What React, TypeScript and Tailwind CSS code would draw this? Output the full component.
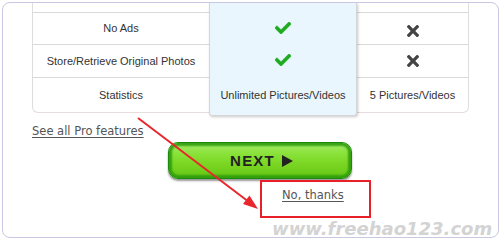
import React from "react";

const sans = { fontFamily: '"Liberation Sans", Arial, sans-serif' };
const deja = { fontFamily: '"DejaVu Sans", Verdana, sans-serif' };

function Check() {
  return (
    <svg width="16" height="12" viewBox="0 69 512 375" className="block">
      <path
        fill="#1faa1f"
        stroke="#1faa1f"
        strokeWidth="20"
        d="M173.898 439.404l-166.4-166.4c-9.997-9.997-9.997-26.206 0-36.204l36.203-36.204c9.997-9.998 26.207-9.998 36.204 0L192 312.69 432.095 72.596c9.997-9.997 26.207-9.997 36.204 0l36.203 36.204c9.997 9.997 9.997 26.206 0 36.204l-294.4 294.401c-9.998 9.997-26.207 9.997-36.204-.001z"
      />
    </svg>
  );
}

function Cross() {
  return (
    <svg width="12" height="12" viewBox="0 80 352 352" className="block">
      <path
        fill="#444444"
        d="M242.72 256l100.07-100.07c12.28-12.280 12.28-32.19 0-44.48l-22.24-22.24c-12.28-12.28-32.19-12.28-44.48 0L176 189.28 75.930 89.21c-12.28-12.28-32.19-12.28-44.48 0L9.21 111.45c-12.28 12.28-12.28 32.19 0 44.48L109.28 256 9.21 356.07c-12.28 12.28-12.28 32.19 0 44.48l22.24 22.24c12.28 12.28 32.2 12.28 44.48 0L176 322.72l100.07 100.07c12.28 12.28 32.2 12.28 44.48 0l22.24-22.24c12.28-12.28 12.28-32.19 0-44.48L242.72 256z"
      />
    </svg>
  );
}

const rowH = ["h-[10px]", "h-[32px]", "h-[33px]", "h-[34px]"];

export default function App() {
  const left = ["", "No Ads", "Store/Retrieve Original Photos", "Statistics"];
  return (
    <div className="relative w-[500px] h-[240px] bg-white overflow-hidden">
      <div className="ml-[2px] mt-[2px] w-[497px] h-[236px] border border-[#c8c8e2] rounded-[8px] overflow-hidden pl-[29px] flex flex-col items-start">
        {/* table */}
        <div
          className="flex w-[437px] border-l border-r border-b border-[#dddddd] border-b-[#e6dcdc] rounded-b-[6px] text-[11px] text-[#333333]"
          style={sans}
        >
          <div className="w-[176px] flex flex-col">
            {left.map((t, i) => (
              <div
                key={i}
                className={`${rowH[i]} flex items-center justify-center ${i < 3 ? "border-b border-[#d9d9d9]" : ""}`}
              >
                {t}
              </div>
            ))}
          </div>
          <div className="relative z-10 w-[148px] -mb-[4px] flex flex-col bg-[#e9f6fd] border-l border-r border-b border-[#d6d6d6] rounded-b-[3px] shadow-[1px_1px_3px_rgba(0,0,0,0.22)]">
            <div className="h-[10px]" />
            <div className="h-[32px] flex items-center justify-center pb-[2px]">
              <Check />
            </div>
            <div className="h-[33px] flex items-center justify-center pb-[3px]">
              <Check />
            </div>
            <div className="h-[34px] flex items-center justify-center">
              Unlimited Pictures/Videos
            </div>
          </div>
          <div className="w-[111px] flex flex-col">
            <div className="h-[10px] border-b border-[#d9d9d9]" />
            <div className="h-[32px] flex items-center justify-center border-b border-[#d9d9d9] pt-[4px]">
              <Cross />
            </div>
            <div className="h-[33px] flex items-center justify-center border-b border-[#d9d9d9]">
              <Cross />
            </div>
            <div className="h-[34px] flex items-center justify-center">
              5 Pictures/Videos
            </div>
          </div>
        </div>

        {/* link */}
        <a
          href="#"
          className="mt-[11px] block leading-[14px] text-[11.5px] text-[#555555] underline underline-offset-[2px]"
          style={deja}
        >
          See all Pro features
        </a>

        {/* next button */}
        <button
          className="mt-[4px] ml-[136px] w-[184px] h-[37px] rounded-[10px] border border-[#1c8a0c] bg-[linear-gradient(to_bottom,#a6ec6c_0%,#8ae23a_30%,#7ad622_60%,#66c616_100%)] shadow-[inset_0_0_2px_3px_rgba(45,155,12,0.9),0_2px_2px_rgba(0,0,0,0.4)] flex items-center justify-center pl-[3px]"
          style={sans}
        >
          <span className="text-[15px] font-bold tracking-[1.2px] text-[#222222] leading-none">
            NEXT
          </span>
          <svg width="11" height="12" viewBox="0 0 11 12" className="ml-[7px]">
            <polygon points="0,0 11,6 0,12" fill="#222222" />
          </svg>
        </button>

        {/* no thanks box */}
        <div className="mt-[1px] ml-[228px] w-[111px] h-[38px] border-2 border-[#e8202a] pt-[6px] pl-[20px]">
          <a
            href="#"
            className="block leading-[14px] text-[11.5px] text-[#555555] underline underline-offset-[2px]"
            style={deja}
          >
            No, thanks
          </a>
        </div>
      </div>

      {/* annotation arrow */}
      <svg
        className="absolute left-0 top-0 pointer-events-none z-20"
        width="500"
        height="240"
        viewBox="0 0 500 240"
      >
        <line x1="138" y1="118" x2="249" y2="202" stroke="#e8262c" strokeWidth="2" />
        <polygon points="258,209 243,204 249.5,195.5" fill="#e8262c" />
      </svg>

      {/* watermark */}
      <div
        className="absolute left-[272px] top-[220px] text-[18px] leading-[18px] font-bold italic text-[#d3d3d3] whitespace-nowrap pointer-events-none"
        style={deja}
      >
        www.freehao123.com
      </div>
    </div>
  );
}
